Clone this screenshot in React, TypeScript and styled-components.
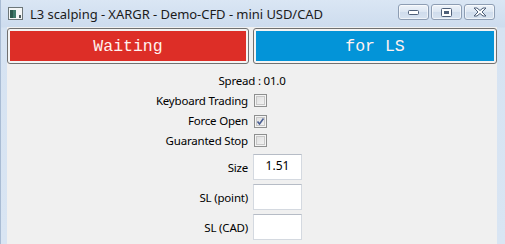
import React from "react";
import styled, { createGlobalStyle } from "styled-components";

const GlobalStyle = createGlobalStyle`
  html, body {
    margin: 0;
    padding: 0;
    background: #d6e3f1;
  }
  * {
    box-sizing: border-box;
  }
`;

const Frame = styled.div`
  width: 505px;
  height: 244px;
  overflow: hidden;
  background: linear-gradient(180deg, #dae6f4 0px, #cddcee 27px, #d6e3f2 28px, #d9e5f3 100%);
  border-left: 1px solid #a9bcd4;
  padding: 0 8px 0 6px;
  display: flex;
  flex-direction: column;
  font-family: "Noto Sans", "Open Sans", sans-serif;
  font-size: 11.5px;
  letter-spacing: -0.2px;
  color: #000;
`;

const TitleBar = styled.div`
  height: 27px;
  display: flex;
  align-items: center;
  padding-left: 1px;
  flex-shrink: 0;
`;

const TitleText = styled.span`
  margin-left: 7px;
  font-size: 13px;
  letter-spacing: -0.05px;
  color: #1b1b1b;
  white-space: nowrap;
  flex: 1;
`;

const Controls = styled.div`
  display: flex;
  gap: 2px;
  margin-right: 2px;
  margin-top: -3px;
`;

const CtrlButton = styled.div`
  width: 31px;
  height: 16px;
  border: 1px solid #8d9db3;
  border-radius: 3px;
  background: linear-gradient(180deg, #eef3f9 0%, #dce6f2 50%, #cfdcec 51%, #d8e3f0 100%);
  box-shadow: inset 0 0 0 1px rgba(255, 255, 255, 0.6);
  display: flex;
  align-items: center;
  justify-content: center;
`;

const Client = styled.div`
  flex: 1;
  background: #f0f0f0;
  padding-top: 1px;
`;

const TwoCol = styled.div<{ $h?: number }>`
  display: grid;
  grid-template-columns: 241px 1fr;
  column-gap: 5px;
  align-items: center;
  height: ${(p) => (p.$h ? `${p.$h}px` : "auto")};
`;

const ButtonRow = styled.div`
  display: grid;
  grid-template-columns: 242px 1fr;
  column-gap: 4px;
  height: 36px;
  margin-bottom: 6px;
`;

const BigButton = styled.button<{ $color: string }>`
  border: 1px solid #707070;
  border-radius: 3px;
  padding: 2px;
  background: #f4f4f4;
  display: flex;
  cursor: pointer;
  span {
    flex: 1;
    background: ${(p) => p.$color};
    color: #fff2f0;
    font-family: "Liberation Mono", "Courier New", monospace;
    font-size: 16.5px;
    letter-spacing: 0;
    display: flex;
    align-items: center;
    justify-content: center;
  }
`;

const Spread = styled.div`
  height: 20px;
  display: flex;
  align-items: center;
  justify-content: center;
`;

const Label = styled.label`
  text-align: right;
  white-space: nowrap;
`;

const Check = styled.span<{ $on?: boolean }>`
  width: 13px;
  height: 13px;
  border: 1px solid #8e8f8f;
  background: linear-gradient(135deg, #dcdcdc 0%, #f6f6f6 100%);
  box-shadow: inset 0 0 0 1px #f4f4f4, inset 0 0 0 2px #c8c8c8;
  display: flex;
  align-items: center;
  justify-content: center;
  margin-left: 1px;
  margin-top: ${(p) => (p.$on ? "2px" : "0")};
`;

const Field = styled.input`
  width: 49px;
  height: 26px;
  border: 1px solid #d4d9e0;
  border-top-color: #b6bcc6;
  background: #fff;
  text-align: center;
  font-family: "Noto Sans", "Open Sans", sans-serif;
  font-size: 12px;
  padding: 0 0 4px;
  outline: none;
`;

const Spacer = styled.div`
  height: 2px;
`;

function AppIcon() {
  return (
    <svg width="15" height="13" viewBox="0 0 15 13">
      <rect x="0.5" y="0.5" width="14" height="12" fill="#f4f6f6" stroke="#6d7779" />
      <rect x="2" y="3" width="6" height="8" fill="#3f7a6a" />
      <rect x="2" y="3" width="3" height="8" fill="#2c5a4e" />
      <rect x="11" y="8" width="2" height="3" fill="#4d5a5c" />
    </svg>
  );
}

const rows: { label: string; checked: boolean }[] = [
  { label: "Keyboard Trading", checked: false },
  { label: "Force Open", checked: true },
  { label: "Guaranted Stop", checked: false },
];

const fields: { label: string; value: string }[] = [
  { label: "Size", value: "1.51" },
  { label: "SL (point)", value: "" },
  { label: "SL (CAD)", value: "" },
];

export default function App() {
  return (
    <>
      <GlobalStyle />
      <Frame>
        <TitleBar>
          <AppIcon />
          <TitleText>L3 scalping - XARGR - Demo-CFD - mini USD/CAD</TitleText>
          <Controls>
            <CtrlButton>
              <svg width="11" height="6" viewBox="0 0 11 6">
                <rect x="0.5" y="1.5" width="10" height="4" rx="1" fill="#fff" stroke="#4e5f78" />
              </svg>
            </CtrlButton>
            <CtrlButton>
              <svg width="11" height="9" viewBox="0 0 11 9">
                <rect x="0.5" y="0.5" width="10" height="8" rx="1" fill="#fff" stroke="#4e5f78" />
                <rect x="3" y="3" width="5" height="3" fill="#4e5f78" />
              </svg>
            </CtrlButton>
            <CtrlButton>
              <svg width="14" height="10" viewBox="0 0 14 10">
                <path
                  d="M1 1 L4 1 L7 3.5 L10 1 L13 1 L9 5 L13 9 L10 9 L7 6.5 L4 9 L1 9 L5 5 Z"
                  fill="#fff"
                  stroke="#4e5f78"
                  strokeLinejoin="round"
                />
              </svg>
            </CtrlButton>
          </Controls>
        </TitleBar>
        <Client>
          <ButtonRow>
            <BigButton $color="#dd2e27">
              <span>Waiting</span>
            </BigButton>
            <BigButton $color="#0394d8">
              <span>for LS</span>
            </BigButton>
          </ButtonRow>
          <Spread>Spread : 01.0</Spread>
          {rows.map((r) => (
            <TwoCol key={r.label} $h={20}>
              <Label>{r.label}</Label>
              <Check $on={r.checked}>
                {r.checked && (
                  <svg width="9" height="9" viewBox="0 0 9 9">
                    <path d="M1.5 4.5 L3.5 7 L7.5 1.5" fill="none" stroke="#4a5f93" strokeWidth="1.6" />
                  </svg>
                )}
              </Check>
            </TwoCol>
          ))}
          <Spacer />
          {fields.map((f) => (
            <TwoCol key={f.label} $h={30}>
              <Label>{f.label}</Label>
              <Field defaultValue={f.value} />
            </TwoCol>
          ))}
        </Client>
      </Frame>
    </>
  );
}
